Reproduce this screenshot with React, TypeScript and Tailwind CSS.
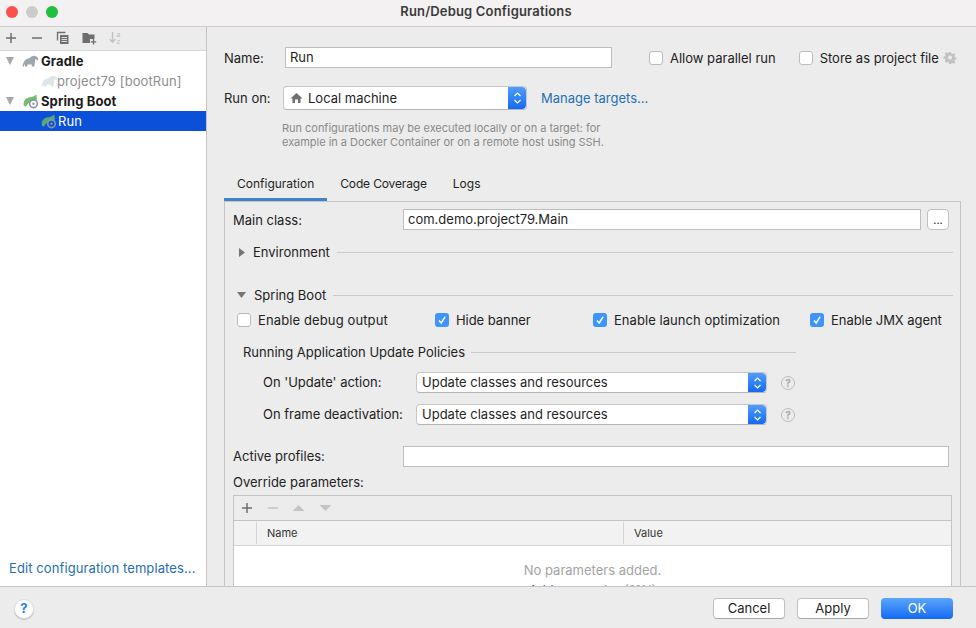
import type { ReactNode } from "react";

const FONT = "font-['Inter','Liberation_Sans',sans-serif]";

function Elephant({ faded = false }: { faded?: boolean }) {
  return (
    <svg width="17" height="13" viewBox="0 0 17 13" className="shrink-0">
      <path
        d="M0.5 11.5C1 7 3.5 3.6 7.5 3.2c1.2-1.6 3-2.7 5-2.5 2 .2 3.6 1.7 3.8 3.4.1.9-.6 1.4-1.3 1.2-.5-.9-1.200-1.200-2-1 .3 2-.2 4.400-.7 7.200h-2.400L9.600 9.200C8.300 9.700 7 9.700 5.700 9.300l-.4 2.200H3l-.2-2.600c-.5.7-.8 1.600-1 2.600z"
        fill={faded ? "#dfe4e8" : "#9aa7b0"}
      />
    </svg>
  );
}

function SpringIcon({ selected = false }: { selected?: boolean }) {
  return (
    <svg width="16" height="15" viewBox="0 0 16 15" className="shrink-0">
      <path
        d="M0.800 11.500C0 7 3 3.500 7 3.200 9.500 3 11.500 2 13.300 0.500c.8 3 .6 5.500-.4 7.500H8c-2.200.4-3.500 1.800-5 4.500-.9 0-1.700-.2-2.200-1z"
        fill={selected ? "#55a878" : "#74bd70"}
      />
      <circle cx="10.500" cy="9.800" r="4.600" fill={selected ? "#8b97a3" : "#8a96a0"} />
      <circle cx="10.500" cy="9.800" r="3" fill={selected ? "#0a4fd6" : "#ffffff"} />
      <circle cx="10.500" cy="9.800" r="1.200" fill={selected ? "#8b97a3" : "#8a96a0"} />
    </svg>
  );
}

function TreeTriangle() {
  return (
    <svg width="10" height="10" viewBox="0 0 10 10" className="shrink-0">
      <path d="M1 1h8L5 9z" fill="#a8a8a8" />
    </svg>
  );
}

function Checkbox({ checked = false }: { checked?: boolean }) {
  if (checked) {
    return (
      <span className="flex h-[14px] w-[14px] shrink-0 items-center justify-center rounded-[3px] bg-[#3d94fb]">
        <svg width="10" height="10" viewBox="0 0 10 10">
          <path d="M2 5.400l2.200 2.600L8.200 1.600" fill="none" stroke="#ffffff" strokeWidth="1.500" />
        </svg>
      </span>
    );
  }
  return <span className="h-[14px] w-[14px] shrink-0 rounded-[3px] border border-[#bdbdbd] bg-white" />;
}

function SelectArrows() {
  return (
    <span className="flex h-full w-[18px] shrink-0 items-center justify-center rounded-r-[4px] bg-gradient-to-b from-[#4f9dfb] to-[#1268f2]">
      <svg width="9" height="14" viewBox="0 0 9 14">
        <path d="M1.500 5L4.500 2l3 3M1.500 9l3 3 3-3" fill="none" stroke="#ffffff" strokeWidth="1.200" />
      </svg>
    </span>
  );
}

function Select({ children, className }: { children: ReactNode; className: string }) {
  return (
    <div className={`flex items-center justify-between overflow-hidden rounded-[4px] border border-[#c6c6c6] border-b-[#b4b4b4] bg-white text-[#1f1f1f] ${className}`}>
      {children}
      <SelectArrows />
    </div>
  );
}

function HelpDot() {
  return (
    <span className="ml-[14px] flex h-[14px] w-[14px] items-center justify-center rounded-full border border-[#b9bdbf] text-[10px] font-bold leading-none text-[#a4a8aa]">
      ?
    </span>
  );
}

function TextField({ value, className }: { value?: string; className: string }) {
  return (
    <div className={`flex items-center border border-[#bebebe] bg-white pl-[4px] text-[#1f1f1f] ${className}`}>
      {value}
    </div>
  );
}

function SectionTitle({ open, label, lineClass, className }: { open: boolean; label: string; lineClass: string; className: string }) {
  return (
    <div className={`flex items-center ${className}`}>
      {open ? (
        <svg width="9" height="6" viewBox="0 0 9 6" className="ml-[4px] mr-[8px]">
          <path d="M0 0h9L4.500 6z" fill="#757575" />
        </svg>
      ) : (
        <svg width="6" height="9" viewBox="0 0 6 9" className="ml-[6px] mr-[8px]">
          <path d="M0 0v9l6-4.500z" fill="#757575" />
        </svg>
      )}
      <span>{label}</span>
      <span className={`h-px flex-1 bg-[#cbcbcb] ${lineClass}`} />
    </div>
  );
}

function CheckItem({ label, checked, className }: { label: string; checked?: boolean; className: string }) {
  return (
    <div className={`flex shrink-0 items-center gap-[7px] ${className}`}>
      <Checkbox checked={checked} />
      <span>{label}</span>
    </div>
  );
}

function Sidebar() {
  return (
    <aside className="flex w-[207px] shrink-0 flex-col border-r border-[#c4c4c4] bg-white tracking-[0.1px]">
      <div className="flex h-[24px] shrink-0 items-center gap-[10px] border-b border-[#d6d6d6] bg-[#ececec] pb-[1px] pl-[4px]">
        <svg width="14" height="14" viewBox="0 0 14 14">
          <path d="M7 2v10M2 7h10" stroke="#6e6e6e" strokeWidth="1.500" />
        </svg>
        <svg width="14" height="14" viewBox="0 0 14 14" className="ml-[2px]">
          <path d="M2 7h10" stroke="#6e6e6e" strokeWidth="1.500" />
        </svg>
        <svg width="14" height="14" viewBox="0 0 14 14" className="ml-[2px]">
          <path d="M1.500 9.500V1.500h8" fill="none" stroke="#6e6e6e" strokeWidth="1.300" />
          <path d="M4 4h8.500v9H4z" fill="#6e6e6e" />
          <path d="M5.500 6.500h5.500M5.500 8.500h5.500M5.500 10.500h5.500" stroke="#ececec" strokeWidth="0.900" />
        </svg>
        <svg width="15" height="14" viewBox="0 0 15 14" className="ml-[2px]">
          <path d="M0.500 2h5l1.500 1.500h5.500V8H8v4H0.500z" fill="#6e6e6e" />
          <path d="M11.500 8v5.500M8.800 10.800h5.400" stroke="#6e6e6e" strokeWidth="1.300" />
        </svg>
        <svg width="15" height="16" viewBox="0 0 15 16" className="ml-[1px]">
          <path d="M4.500 2v10M1.800 9.300l2.700 3 2.700-3" fill="none" stroke="#c2c2c2" strokeWidth="1.400" />
          <text x="8.500" y="6.500" fontSize="7" fill="#c2c2c2" fontFamily="Inter">a</text>
          <text x="8.500" y="14" fontSize="7" fill="#c2c2c2" fontFamily="Inter">z</text>
        </svg>
      </div>
      <div className="flex-1">
        <div className="flex h-[20px] items-center pl-[5px] font-bold text-[#1d1d1d]">
          <TreeTriangle />
          <span className="ml-[7px]"><Elephant /></span>
          <span className="ml-[2px]">Gradle</span>
        </div>
        <div className="flex h-[20px] items-center pl-[41px] text-[#8e8e8e]">
          <Elephant faded />
          <span className="ml-[-1px]">project79 [bootRun]</span>
        </div>
        <div className="flex h-[20px] items-center pl-[5px] font-bold text-[#1d1d1d]">
          <TreeTriangle />
          <span className="ml-[8px]"><SpringIcon /></span>
          <span className="ml-[2px]">Spring Boot</span>
        </div>
        <div className="flex h-[20px] items-center bg-[#0a50d8] pl-[41px] text-white">
          <SpringIcon selected />
          <span className="ml-[1px]">Run</span>
        </div>
      </div>
      <div className="h-[24px] pl-[9px] text-[#2470b3]">Edit configuration templates...</div>
    </aside>
  );
}

function ParamsTable() {
  return (
    <div className="mt-[3px] w-[719px] border-x border-t border-[#c4c4c4] bg-white">
      <div className="flex h-[25px] items-center gap-[12px] border-b border-[#c4c4c4] bg-[#ececec] pl-[6px]">
        <svg width="14" height="14" viewBox="0 0 14 14">
          <path d="M7 2v10M2 7h10" stroke="#6e6e6e" strokeWidth="1.500" />
        </svg>
        <svg width="14" height="14" viewBox="0 0 14 14">
          <path d="M2 7h10" stroke="#c4c4c4" strokeWidth="1.500" />
        </svg>
        <svg width="13" height="8" viewBox="0 0 13 8">
          <path d="M6.500 1L12.500 7H0.500z" fill="#c4c4c4" />
        </svg>
        <svg width="13" height="8" viewBox="0 0 13 8" className="ml-[2px]">
          <path d="M0.500 1h12l-6 6z" fill="#c4c4c4" />
        </svg>
      </div>
      <div className="flex h-[25px] items-stretch border-b border-[#d6d6d6] bg-[#f2f2f2] py-[1px] text-[11px] text-[#333333]">
        <span className="w-[23px] border-r border-[#d6d6d6]" />
        <span className="flex w-[367px] items-center border-r border-[#d6d6d6] pl-[10px]">Name</span>
        <span className="flex items-center pl-[10px]">Value</span>
      </div>
      <div className="flex h-[60px] flex-col items-center pt-[14px] text-[#a4a4a4]">
        <span className="leading-[20px]">No parameters added.</span>
        <span className="leading-[20px]">
          <span className="text-[#2470b3]">Add parameter</span> (⌘N)
        </span>
      </div>
    </div>
  );
}

function ConfigPanel() {
  return (
    <div className="min-h-0 flex-1 overflow-hidden border-x border-t border-[#c4c4c4] pl-[8px] pr-[7px]">
      <div className="mt-[7px] flex h-[21px] items-center">
        <span className="w-[170px] pt-[1px]">Main class:</span>
        <TextField value="com.demo.project79.Main" className="h-[21px] w-[518px]" />
        <span className="ml-[6px] flex h-[21px] w-[22px] items-end justify-center rounded-[4px] border border-[#c0c0c0] bg-white pb-[3px] text-[11px] leading-none">...</span>
      </div>
      <SectionTitle open={false} label="Environment" lineClass="ml-[7px]" className="mt-[12px] h-[20px]" />
      <SectionTitle open label="Spring Boot" lineClass="ml-[7px]" className="mt-[23px] h-[20px]" />
      <div className="mt-[5px] flex h-[20px] items-center pl-[4px]">
        <CheckItem label="Enable debug output" className="w-[198px] tracking-[0.12px]" />
        <CheckItem label="Hide banner" checked className="w-[158px] tracking-[-0.05px]" />
        <CheckItem label="Enable launch optimization" checked className="w-[217px] tracking-[0.05px]" />
        <CheckItem label="Enable JMX agent" checked className="tracking-[-0.05px]" />
      </div>
      <div className="mt-[12px] ml-[10px] flex h-[20px] w-[553px] items-center">
        <span>Running Application Update Policies</span>
        <span className="ml-[6px] h-px flex-1 bg-[#cbcbcb]" />
      </div>
      <div className="mt-[10px] flex h-[21px] items-center pl-[30px]">
        <span className="w-[153px]">On 'Update' action:</span>
        <Select className="h-[21px] w-[351px] pl-[5px]">Update classes and resources</Select>
        <HelpDot />
      </div>
      <div className="mt-[11px] flex h-[21px] items-center pl-[30px]">
        <span className="w-[153px]">On frame deactivation:</span>
        <Select className="h-[21px] w-[351px] pl-[5px]">Update classes and resources</Select>
        <HelpDot />
      </div>
      <div className="mt-[21px] flex h-[21px] items-center">
        <span className="w-[170px]">Active profiles:</span>
        <TextField className="h-[21px] w-[546px]" />
      </div>
      <div className="mt-[5px] flex h-[20px] items-center">Override parameters:</div>
      <ParamsTable />
    </div>
  );
}

function MainPane() {
  return (
    <main className="flex min-w-0 flex-1 flex-col overflow-hidden bg-[#ececec] pl-[17px]">
      <div className="mt-[20px] flex h-[21px] shrink-0 items-center">
        <span className="w-[61px] pt-[1px]">Name:</span>
        <TextField value="Run" className="h-[21px] w-[327px]" />
        <div className="ml-[37px] flex items-center gap-[7px] pt-[1px]">
          <Checkbox />
          <span>Allow parallel run</span>
        </div>
        <div className="ml-[23px] flex items-center gap-[7px] pt-[1px]">
          <Checkbox />
          <span>Store as project file</span>
        </div>
        <svg width="14" height="14" viewBox="0 0 14 14" className="ml-[4px]">
          <path
            d="M6 1h2l.3 1.600 1.300.5 1.300-.9 1.400 1.400-.9 1.300.5 1.300 1.600.3v2l-1.600.3-.5 1.300.9 1.300-1.400 1.400-1.300-.9-1.300.5L8 13H6l-.3-1.600-1.300-.5-1.300.9-1.400-1.400.9-1.300-.5-1.300L.5 7.500v-2l1.600-.3.5-1.300-.9-1.300 1.400-1.400 1.300.9 1.300-.5z"
            fill="#c2c2c2"
          />
          <circle cx="7" cy="6.500" r="2" fill="#ececec" />
        </svg>
      </div>
      <div className="mt-[18px] flex h-[24px] shrink-0 items-center">
        <span className="w-[59px]">Run on:</span>
        <Select className="h-[24px] w-[244px] pl-[6px]">
          <span className="flex items-center gap-[5px]">
            <svg width="13" height="12" viewBox="0 0 13 12">
              <path d="M6.500 1L0.500 6.500H2.500V11H5V7.500h3V11h2.500V6.500h2z" fill="#6e6e6e" />
            </svg>
            Local machine
          </span>
        </Select>
        <span className="ml-[14px] text-[#2470b3]">Manage targets...</span>
      </div>
      <p className="mt-[11px] ml-[58px] w-[340px] shrink-0 text-[11px] leading-[14px] tracking-[-0.03px] text-[#8a8a8a]">
        Run configurations may be executed locally or on a target: for example in a Docker Container or on a remote host using SSH.
      </p>
      <div className="mt-[21px] flex h-[31px] shrink-0 text-[12px]">
        <span className="flex items-center border-b-[3px] border-[#4083c9] px-[13px] text-[#1f1f1f]">Configuration</span>
        <span className="flex items-center px-[13px] pb-[3px] tracking-[-0.15px]">Code Coverage</span>
        <span className="flex items-center px-[13px] pb-[3px]">Logs</span>
      </div>
      <div className="mr-[15px] flex min-h-0 flex-1 flex-col">
        <ConfigPanel />
      </div>
    </main>
  );
}

function Footer() {
  return (
    <footer className="flex h-[42px] shrink-0 items-center border-t border-[#c6c6c6] bg-[#ececec] pl-[14px] pr-[23px] pt-[2px]">
      <span className="flex h-[20px] w-[20px] items-center justify-center rounded-full border border-[#dedede] bg-white text-[13px] font-bold text-[#2f7cf6] shadow-[0_1px_1px_rgba(0,0,0,0.2)]">?</span>
      <span className="ml-auto flex h-[21px] w-[72px] items-center justify-center rounded-[4px] border border-[#c0c0c0] border-b-[#a8a8a8] bg-white text-[#1f1f1f]">Cancel</span>
      <span className="ml-[12px] flex h-[21px] w-[72px] items-center justify-center rounded-[4px] border border-[#c0c0c0] border-b-[#a8a8a8] bg-white text-[#1f1f1f]">Apply</span>
      <span className="ml-[12px] flex h-[21px] w-[72px] items-center justify-center rounded-[4px] bg-gradient-to-b from-[#5aa5fb] to-[#1269f3] text-white">OK</span>
    </footer>
  );
}

export default function App() {
  return (
    <div className={`flex h-[628px] w-[976px] flex-col overflow-hidden bg-[#ececec] text-[13px] leading-none text-[#222222] ${FONT}`}>
      <header className="relative flex h-[27px] shrink-0 items-center justify-center border-b border-[#cfcdcd] bg-[#f3f1f1] pb-[3px] pr-[4px]">
        <div className="absolute left-[6px] top-[6px] flex gap-[8px]">
          <span className="h-[12px] w-[12px] rounded-full bg-[#fb4f4b]" />
          <span className="h-[12px] w-[12px] rounded-full bg-[#cdcccc]" />
          <span className="h-[12px] w-[12px] rounded-full bg-[#1fc03e]" />
        </div>
        <span className="font-semibold tracking-[0.17px] text-[#3a3a3a]">Run/Debug Configurations</span>
      </header>
      <div className="flex min-h-0 flex-1">
        <Sidebar />
        <MainPane />
      </div>
      <Footer />
    </div>
  );
}
